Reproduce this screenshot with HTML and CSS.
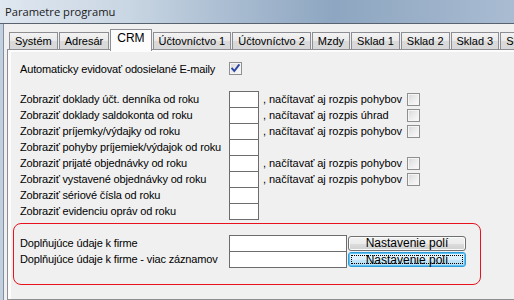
FILE: index.html
```html
<!DOCTYPE html>
<html>
<head>
<meta charset="utf-8">
<link rel="stylesheet" href="styles.css">
</head>
<body>
<div class="titlebar"><span class="title">Parametre programu</span></div>
<div class="win">
  <div class="frame-l"></div>
  <div class="client">
    <div class="tabs">
      <div class="tab">Systém</div>
      <div class="tab">Adresár</div>
      <div class="tab active">CRM</div>
      <div class="tab">Účtovníctvo 1</div>
      <div class="tab">Účtovníctvo 2</div>
      <div class="tab">Mzdy</div>
      <div class="tab">Sklad 1</div>
      <div class="tab">Sklad 2</div>
      <div class="tab">Sklad 3</div>
      <div class="tab">Sklad 4</div>
    </div>
    <div class="panel">
      <div class="content">
        <div class="auto-row">
          <span class="lbl auto-lbl">Automaticky evidovať odosielané E-maily</span>
          <span class="cb"><svg width="11" height="11" viewBox="0 0 11 11"><path d="M2.2 5.6 L4.3 8 L8.8 2.2" fill="none" stroke="#2b45a6" stroke-width="1.9" stroke-linecap="square"/></svg></span>
        </div>
        <div class="grid">
          <span class="lbl">Zobraziť doklady účt. denníka od roku</span><span class="box"></span><span class="rt">, načítavať aj rozpis pohybov</span><span class="cbcell"><span class="cb"></span></span>
          <span class="lbl">Zobraziť doklady saldokonta od roku</span><span class="box"></span><span class="rt">, načítavať aj rozpis úhrad</span><span class="cbcell"><span class="cb"></span></span>
          <span class="lbl">Zobraziť príjemky/výdajky od roku</span><span class="box"></span><span class="rt">, načítavať aj rozpis pohybov</span><span class="cbcell"><span class="cb"></span></span>
          <span class="lbl">Zobraziť pohyby príjemiek/výdajok od roku</span><span class="box"></span><span class="rt"></span><span class="cbcell"></span>
          <span class="lbl">Zobraziť prijaté objednávky od roku</span><span class="box"></span><span class="rt">, načítavať aj rozpis pohybov</span><span class="cbcell"><span class="cb"></span></span>
          <span class="lbl">Zobraziť vystavené objednávky od roku</span><span class="box"></span><span class="rt">, načítavať aj rozpis pohybov</span><span class="cbcell"><span class="cb"></span></span>
          <span class="lbl">Zobraziť sériové čísla od roku</span><span class="box"></span><span class="rt"></span><span class="cbcell"></span>
          <span class="lbl">Zobraziť evidenciu opráv od roku</span><span class="box last"></span><span class="rt"></span><span class="cbcell"></span>
        </div>
        <div class="group">
          <div class="ggrid">
            <span class="lbl">Doplňujúce údaje k firme</span><span class="box wide"></span><span class="btncell"><span class="btn">Nastavenie polí</span></span>
            <span class="lbl">Doplňujúce údaje k firme - viac záznamov</span><span class="box wide last"></span><span class="btncell"><span class="btn focus"><span class="focusrect">Nastavenie polí</span></span></span>
          </div>
        </div>
      </div>
    </div>
  </div>
</div>
</body>
</html>
```
FILE: styles.css
```css
* { box-sizing: border-box; }
html, body {
  margin: 0;
  padding: 0;
  width: 514px;
  height: 300px;
  overflow: hidden;
  background: #f0f0f0;
}
body {
  font-family: "Liberation Sans", Arial, sans-serif;
  font-size: 11px;
  color: #000;
}
.titlebar {
  height: 24px;
  border-bottom: 1px solid #58636f;
  background: linear-gradient(to right, #dfe7f0 0%, #c9d6e3 25%, #a9bcd1 45%, #8ea6c1 65%, #9db2ca 85%, #a9bcd2 100%);
  padding-left: 5px;
  display: flex;
  align-items: center;
}
.title {
  font-family: "Open Sans", "Noto Sans", sans-serif;
  font-size: 11.2px;
  color: #1a1a1a;
  margin-top: -1px;
}
.win {
  display: flex;
  height: 276px;
}
.frame-l {
  width: 4px;
  background: #c2d0de;
  border-right: 1px solid #7f8fa1;
}
.client {
  flex: 1;
  background: #f0f0f0;
  display: flex;
  flex-direction: column;
  min-width: 0;
  overflow: hidden;
}
.tabs {
  display: flex;
  align-items: flex-end;
  height: 25px;
  padding-top: 5px;
  padding-left: 5px;
  gap: 1px;
  white-space: nowrap;
}
.tab {
  height: 17px;
  padding: 0 5px;
  border: 1px solid #8c8e94;
  border-bottom: none;
  background: linear-gradient(#f3f3f3, #e9e9e9 50%, #dadada 51%, #d8d8d8);
  line-height: 16px;
  font-size: 11px;
  flex: none;
}
.tab.active {
  height: 22px;
  margin: 0 0 -2px 0;
  padding: 0 6px;
  background: #fcfcfc;
  position: relative;
  z-index: 1;
  line-height: 16px;
  font-size: 12px;
}
.panel {
  margin-left: 3px;
  flex: 1;
  border: 1px solid #8c8e94;
  border-right: none;
  background: #fcfcfc;
  padding: 2px 0 0 3px;
}
.content {
  background: #f0f0f0;
  height: 100%;
  padding: 10px 0 0 9px;
}
.auto-row {
  display: flex;
  align-items: center;
  height: 13px;
}
.auto-lbl {
  width: 209px;
  flex: none;
}
.cb {
  display: inline-block;
  width: 13px;
  height: 13px;
  border: 1px solid #8e8f8f;
  background: linear-gradient(135deg, #d6d6d6 0%, #ececec 50%, #fbfbfb 100%);
  box-shadow: inset 0 0 0 1px #f5f5f5;
  position: relative;
}
.cb svg {
  position: absolute;
  left: 0;
  top: 0;
}
.grid {
  margin-top: 16px;
  display: grid;
  grid-template-columns: 209px 30px 148px 13px;
}
.lbl {
  line-height: 16px;
  height: 16px;
  white-space: nowrap;
  letter-spacing: -0.15px;
}
.box {
  height: 16px;
  background: #fff;
  border: 1px solid #6d6d6d;
  border-bottom: none;
}
.box.last {
  height: 17px;
  border-bottom: 1px solid #6d6d6d;
}
.rt {
  padding-left: 4px;
  line-height: 16px;
  white-space: nowrap;
  letter-spacing: -0.05px;
}
.cbcell {
  display: flex;
  align-items: center;
  height: 16px;
}
.group {
  margin: 3px 0 0 -7px;
  width: 468px;
  height: 62px;
  border: 1px solid #e8121e;
  border-radius: 8px;
  padding: 11px 0 0 6px;
}
.ggrid {
  display: grid;
  grid-template-columns: 209px 118px 119px;
}
.box.wide {
  width: 118px;
}
.btncell {
  height: 16px;
  padding: 1px 0 0 1px;
}
.btn {
  display: flex;
  align-items: center;
  justify-content: center;
  width: 118px;
  height: 15px;
  border: 1px solid #707070;
  border-radius: 3px;
  background: linear-gradient(#f2f2f2, #ebebeb 50%, #dddddd 51%, #cfcfcf);
  box-shadow: inset 0 0 0 1px #fbfbfb;
  line-height: 13px;
  font-size: 12px;
}
.btn.focus {
  border-color: #2f9bd8;
  background: linear-gradient(#eaf6fd, #d9f0fc 50%, #c5e6f8 51%, #b4ddf3);
  box-shadow: inset 0 0 0 1px #5ec2f2;
  padding: 2px;
}
.focusrect {
  display: flex;
  align-items: center;
  justify-content: center;
  width: 100%;
  height: 100%;
  border: 1px dotted #000;
  line-height: 10px;
}
```
